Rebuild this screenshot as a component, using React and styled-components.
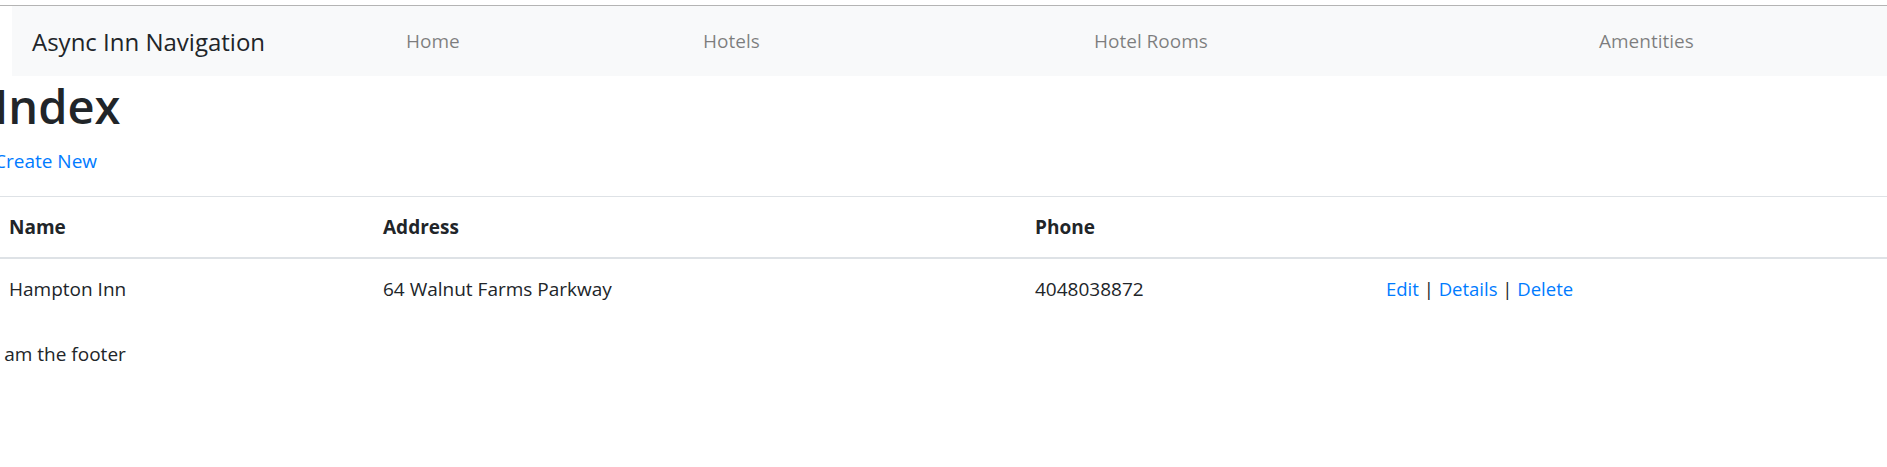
import React from "react";
import styled, { createGlobalStyle } from "styled-components";

const GlobalStyle = createGlobalStyle`
  html, body {
    margin: 0;
    padding: 0;
    background: #fff;
    overflow-x: hidden;
  }
  body {
    font-family: "Open Sans", "Noto Sans", sans-serif;
    font-size: 20px;
    line-height: 30px;
    color: #212529;
  }
`;

const Page = styled.div`
  padding-top: 5px;
`;

const Header = styled.header`
  border-top: 1px solid #b4b4b4;
`;

const Navbar = styled.nav`
  margin-left: 12px;
  background: #f8f9fa;
  height: 70px;
  padding: 0 20px;
  display: grid;
  grid-template-columns: 374px 297px 391px 505px 1fr;
  align-items: center;
`;

const Brand = styled.a`
  font-size: 24px;
  line-height: 37px;
  color: #212529;
  white-space: nowrap;
  text-decoration: none;
`;

const NavLink = styled.a`
  font-size: 19px;
  color: rgba(0, 0, 0, 0.5);
  text-decoration: none;
  white-space: nowrap;
`;

const Main = styled.main`
  margin-left: -6px;
`;

const Title = styled.h1`
  margin: 0 0 10px;
  font-size: 47px;
  line-height: 60px;
  font-weight: 600;
  color: #212529;
`;

const Para = styled.p`
  margin: 0 0 20px;
  font-size: 19px;
`;

const Link = styled.a`
  color: #007bff;
  text-decoration: none;
`;

const Table = styled.table`
  width: 100%;
  table-layout: fixed;
  border-collapse: collapse;
  margin-bottom: 20px;
  font-size: 19px;
`;

const Th = styled.th`
  text-align: left;
  font-weight: 700;
  padding: 15px;
  border-top: 1px solid #dee2e6;
  border-bottom: 2px solid #dee2e6;
`;

const Td = styled.td`
  padding: 15px;
  border-top: ${(p) => (p.$first ? "none" : "1px solid #dee2e6")};
`;

const Actions = styled.span`
  font-size: 18.5px;
`;

const Sep = styled.span`
  color: #212529;
`;

const Footer = styled.footer`
  font-size: 19px;
`;

const hotels = [
  { name: "Hampton Inn", address: "64 Walnut Farms Parkway", phone: "4048038872" },
];

export default function App() {
  return (
    <Page>
      <GlobalStyle />
      <Header>
        <Navbar>
          <Brand href="#">Async Inn Navigation</Brand>
          <NavLink href="#">Home</NavLink>
          <NavLink href="#">Hotels</NavLink>
          <NavLink href="#">Hotel Rooms</NavLink>
          <NavLink href="#">Amentities</NavLink>
        </Navbar>
      </Header>
      <Main>
        <Title>Index</Title>
        <Para>
          <Link href="#">Create New</Link>
        </Para>
        <Table>
          <colgroup>
            <col style={{ width: 374 }} />
            <col style={{ width: 652 }} />
            <col style={{ width: 351 }} />
            <col />
          </colgroup>
          <thead>
            <tr>
              <Th>Name</Th>
              <Th>Address</Th>
              <Th>Phone</Th>
              <Th></Th>
            </tr>
          </thead>
          <tbody>
            {hotels.map((h, i) => (
              <tr key={h.name}>
                <Td $first={i === 0}>{h.name}</Td>
                <Td $first={i === 0}>{h.address}</Td>
                <Td $first={i === 0}>{h.phone}</Td>
                <Td $first={i === 0}>
                  <Actions>
                    <Link href="#">Edit</Link> <Sep>|</Sep>{" "}
                    <Link href="#">Details</Link> <Sep>|</Sep>{" "}
                    <Link href="#">Delete</Link>
                  </Actions>
                </Td>
              </tr>
            ))}
          </tbody>
        </Table>
        <Footer>I am the footer</Footer>
      </Main>
    </Page>
  );
}
